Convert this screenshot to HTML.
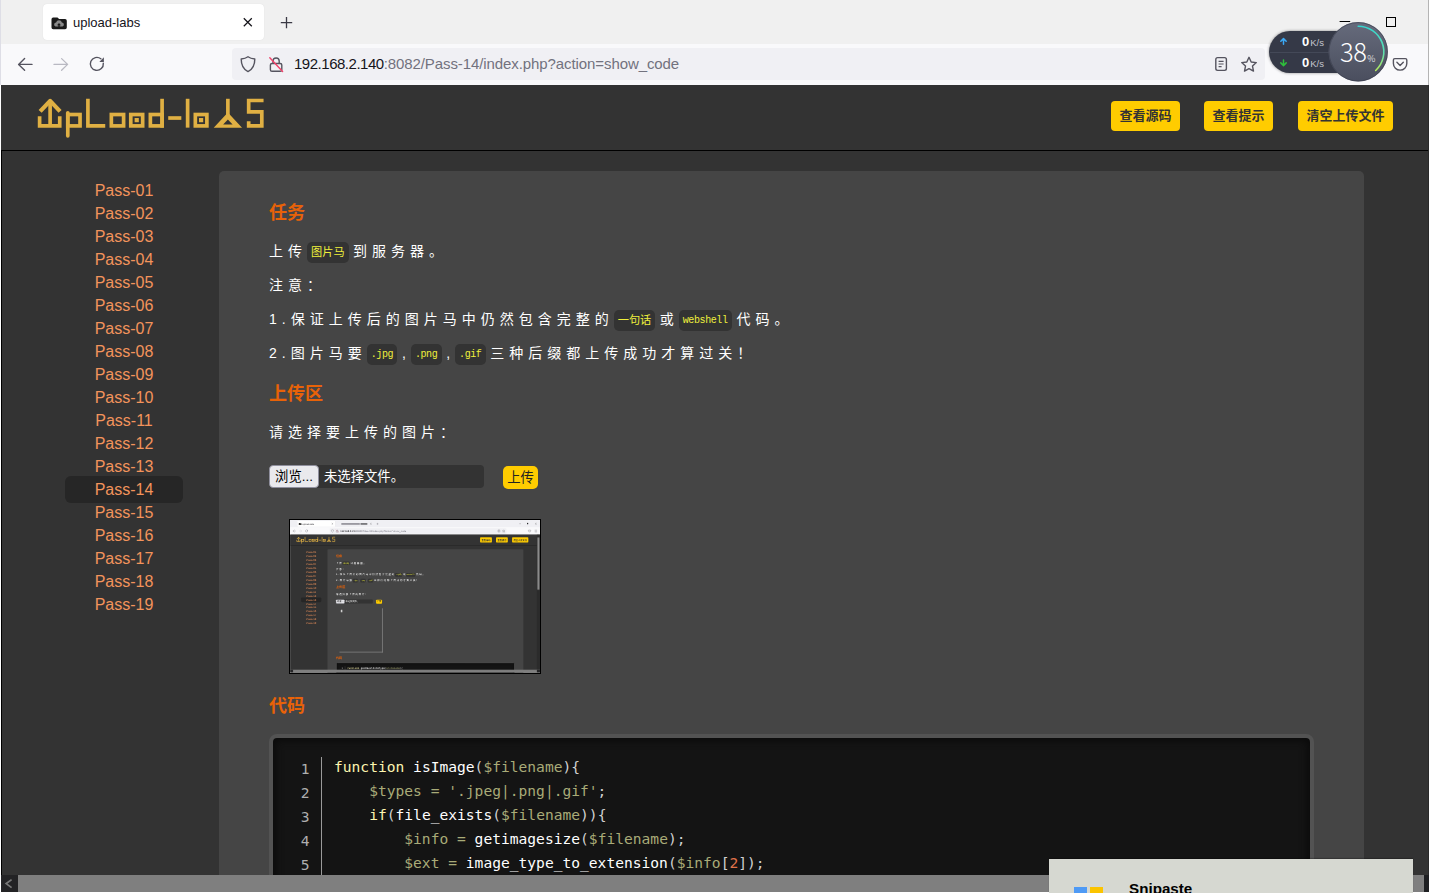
<!DOCTYPE html>
<html lang="zh-CN">
<head>
<meta charset="utf-8">
<title>upload-labs</title>
<style>
*{box-sizing:border-box;margin:0;padding:0}
html,body{width:1429px;height:893px;overflow:hidden;background:#fff}
body{position:relative;font-family:"Liberation Sans","Noto Sans CJK SC",sans-serif}
.abs{position:absolute}
/* ---------- browser chrome ---------- */
.tabbar{left:0;top:0;height:44px;background:#f0f0f0}
.navbar{left:0;top:44px;height:41px;background:#f9f9fb}
.tab{left:43px;top:4px;width:221px;height:36px;background:#fff;border-radius:4px;box-shadow:0 0 1px rgba(0,0,0,.12)}
.tabtitle{top:15px;font-size:13px;line-height:16px;color:#15141a;font-family:"Liberation Sans","Noto Sans CJK SC",sans-serif;white-space:nowrap}
.urlbar{left:232px;top:48px;height:32px;background:#f0f0f4;border-radius:4px}
.url{left:294px;top:55px;font-size:15px;line-height:18px;color:#15141a;white-space:nowrap;font-family:"Liberation Sans",sans-serif;letter-spacing:-.48px}
.url span{color:#72727e;letter-spacing:-.09px}
/* ---------- page ---------- */
.pg{left:1px;top:85px;height:807px;background:#333;overflow:hidden}
.head{left:0;top:0;width:100%;height:65px;background:#333}
.headline{left:0;top:65px;width:100%;height:1px;background:#000}
.hbtn{top:16px;height:30px;background:#fc0;border-radius:4px;color:#333;font-size:13px;font-weight:bold;line-height:30px;text-align:center;white-space:nowrap;font-family:"Liberation Sans","Noto Sans CJK SC",sans-serif}
.menu a{position:absolute;left:64px;width:118px;height:27px;line-height:28px;text-align:center;font-size:16px;color:#f3945c;text-decoration:none;border-radius:6px;font-family:"Liberation Sans",sans-serif}
.menu a.on{background:#262626}
.panel{left:218px;top:86px;width:1145px;height:800px;background:#454545;border-radius:5px}
h3{position:absolute;left:268px;margin-top:1px;font-size:18px;line-height:24px;color:#e86208;font-weight:bold;font-family:"Liberation Sans","Noto Sans CJK SC",sans-serif;white-space:nowrap}
.ln{position:absolute;left:268px;font-size:14px;line-height:24px;color:#fff;letter-spacing:5px;white-space:nowrap;font-family:"Liberation Sans","Noto Sans CJK SC",sans-serif}
.ln code{display:inline-block;position:relative;top:0;vertical-align:middle;height:21px;line-height:22.5px;padding:0 4px;margin:0 4.5px 0 0;background:#333;color:#f0f03c;border-radius:5px;font-size:11.2px;letter-spacing:0;font-family:"Liberation Mono","Noto Sans CJK SC",monospace}
.ln code.l{font-size:10px;letter-spacing:-.4px;padding-right:4.4px}
/* upload controls */
.file{left:268px;top:380px;width:215px;height:23px;background:#333;border-radius:4px}
.browse{left:268px;top:380px;width:50px;height:23px;background:#e9e9ed;border:1px solid #8f8f9d;border-radius:4px;font-size:13.33px;line-height:22px;text-align:center;color:#000;white-space:nowrap;font-family:"Liberation Sans","Noto Sans CJK SC",sans-serif}
.nofile{left:323px;top:380px;font-size:13.33px;line-height:24px;color:#fff;white-space:nowrap;font-family:"Liberation Sans","Noto Sans CJK SC",sans-serif}
.upbtn{left:502px;top:381px;width:35px;height:23px;background:#fc0;border-radius:5px;font-size:13.33px;line-height:24px;text-align:center;color:#222;white-space:nowrap;font-family:"Liberation Sans","Noto Sans CJK SC",sans-serif}
/* code block */
.codebox{left:268px;width:1045px;height:260px;background:#141414;border:4px solid #535353;border-radius:8px;box-shadow:inset 0 0 8px 2px #0a0a0a}
.gutter{left:320px;width:1px;height:140px;background:#9a9a9a}
.num{position:absolute;left:288.5px;margin-top:2px;width:20px;text-align:right;line-height:24px;color:#afafaf;font-family:"DejaVu Sans Mono","Liberation Mono",monospace;font-size:14.6px}
pre.cl{position:absolute;left:333px;font-family:"DejaVu Sans Mono","Liberation Mono",monospace;font-size:14.6px;line-height:24px;color:#d0d0d0;white-space:pre}
.k{color:#fdf6b0}.f{color:#fff}.v{color:#a9ab78}.n{color:#e0734a}
/* scrollbars */
.hsb{left:0;top:790px;height:17px;background:#7f7f7f}
.sbb{width:17px;height:17px;background:#232325}
/* snipaste */
#snip{left:1049px;top:859px;width:364px;height:34px;background:#d6d8d1;box-shadow:0 -1px 1px rgba(0,0,0,.22)}
#sniptxt{left:1129px;top:880px;font-size:15.2px;line-height:18px;font-weight:bold;color:#000;font-family:"Liberation Sans",sans-serif;white-space:nowrap}
/* thumbnail */
#thumb{left:288px;top:434px;width:252px;height:155px;background:#000;overflow:hidden}
#thumbclip{left:1px;top:1px;width:250px;height:153px;overflow:hidden;background:#333}
#thumbwin{will-change:transform;text-rendering:geometricPrecision}
#thumbclip{filter:blur(.7px)}
#thumbwin{left:0;top:0.1px;width:1461px;height:894px;transform:scale(.1711) rotate(.01deg);transform-origin:0 0;background:#fff}
.imgbox{left:288px;top:431px;width:254px;height:258px;border-right:4px solid #8a8a8a;border-bottom:4px solid #8a8a8a}
/* net widget */
.nw{font-size:9.5px;line-height:14px;color:#c3c6cf;white-space:nowrap;font-family:"Liberation Sans",sans-serif}
.nw b{font-size:13px;color:#fff;font-weight:bold;margin-right:1px}
#pct{font-size:25.5px;line-height:30px;color:#fff;white-space:nowrap;font-family:"Noto Sans CJK SC","Liberation Sans",sans-serif;letter-spacing:-.5px;font-weight:300}
#pct span{font-size:9px;letter-spacing:0;margin-left:1px}
</style>
</head>
<body>
<!-- browser chrome -->
<div class="abs tabbar" style="width:1429px;background:#f0f0f0"></div>
<div class="abs navbar" style="width:1429px"></div>
<div class="abs tab"></div>
<div class="abs tabtitle" style="left:73px">upload-labs</div>
<div class="abs urlbar" style="width:1033px"></div>
<div class="abs url">192.168.2.140<span>:8082/Pass-14/index.php?action=show_code</span></div>
<svg class="abs" style="left:0;top:0" width="1429" height="85" viewBox="0 0 1429 85" fill="none">
  <path d="M51.5 19.2 q0-1.700 1.700-1.700 h4.300 l1.600 1.600 h6 q1.700 0 1.700 1.700 v6.800 q0 1.700-1.700 1.700 h-11.900 q-1.700 0-1.700-1.700z" fill="#1b1b1b"/>
  <path d="M55.600 26.600 a2.100 2.100 0 0 1 .5-4.100 a3 3 0 0 1 5.800 0 a2.100 2.100 0 0 1 .5 4.100z" fill="#8a8a8a"/>
  <path d="M59 23 l2 2.200 h-1.300 v1.900 h-1.400 v-1.900 h-1.300z" fill="#1b1b1b"/>
  <path d="M243.800 18.300 l8 8 M251.800 18.300 l-8 8" stroke="#15141a" stroke-width="1.250"/>
  <path d="M280.8 22.600 h11.400 M286.5 16.900 v11.400" stroke="#3a3944" stroke-width="1.300"/>
  <path d="M32 64.400 h-13.400 M24.600 58.600 l-6 5.800 l6 5.800" stroke="#55545f" stroke-width="1.400" stroke-linecap="round" stroke-linejoin="round"/>
  <path d="M54 64.400 h13.400 M61.600 58.600 l6 5.800 l-6 5.800" stroke="#b9b9c2" stroke-width="1.300" stroke-linecap="round" stroke-linejoin="round"/>
  <path d="M103.300 63.200 a6.500 6.500 0 1 1 -2.400 -4.400" stroke="#55545f" stroke-width="1.400" stroke-linecap="round"/>
  <path d="M103.900 57.300 v4.600 h-4.600z" fill="#55545f"/>
  <path d="M248 56.800 c2.200 1.600 4.400 2 6.800 2.200 c0 6.200 -1.800 10.200 -6.800 12.600 c-5 -2.400 -6.800 -6.400 -6.800 -12.600 c2.400 -0.200 4.600 -0.600 6.800 -2.200z" stroke="#55545f" stroke-width="1.400" stroke-linejoin="round"/>
  <rect x="270.400" y="63.500" width="11.400" height="7.800" rx="1.600" stroke="#55545f" stroke-width="1.400"/>
  <path d="M273 63.300 v-2.200 a3.100 3.100 0 0 1 6.200 0 v2.200" stroke="#55545f" stroke-width="1.400"/>
  <path d="M269.800 57.800 l12.800 13.800" stroke="#f0426a" stroke-width="1.400" stroke-linecap="round"/>
  <g transform="translate(0 0)">
  <rect x="1215.800" y="57.600" width="10.600" height="12.800" rx="1.800" stroke="#55545f" stroke-width="1.400"/>
  <path d="M1218.600 61.400 h5 M1218.600 64 h5 M1218.600 66.600 h3" stroke="#55545f" stroke-width="1.200"/>
  <path d="M1249 57.300 l2.200 4.700 l5.100 .6 l-3.800 3.500 l1 5 l-4.500 -2.500 l-4.500 2.500 l1 -5 l-3.800 -3.500 l5.100 -.6z" stroke="#55545f" stroke-width="1.400" stroke-linejoin="round"/>
  <path d="M1394.800 58.600 h10.600 q1.400 0 1.400 1.400 v3.400 a6.700 6.700 0 0 1 -13.400 0 v-3.400 q0 -1.400 1.400 -1.400z" stroke="#55545f" stroke-width="1.400"/>
  <path d="M1396.900 62.300 l3.200 3.200 l3.200 -3.200" stroke="#55545f" stroke-width="1.400" stroke-linecap="round" stroke-linejoin="round"/>
  <path d="M1339.600 21.500 h10.600" stroke="#000" stroke-width="1"/>
  <rect x="1386.500" y="17.500" width="9" height="9" stroke="#000" stroke-width="1"/>
  </g>
</svg>
<!-- page -->
<div class="abs pg" style="width:1428px">
<div class="abs head"></div><div class="abs headline"></div>
<div class="abs" style="left:0;top:66px;width:1px;height:724px;background:#000"></div>
<div class="abs hbtn" style="left:1110px;width:69px">查看源码</div>
<div class="abs hbtn" style="left:1203px;width:69px">查看提示</div>
<div class="abs hbtn" style="left:1297px;width:95px">清空上传文件</div>
<svg class="abs" style="left:29px;top:5px" width="250" height="55" viewBox="0 0 1429 314" role="img" aria-label="UpLoad-labs">
    <title>UpLoad-labs</title>
    <g fill="none" stroke="#e0b043" stroke-width="21" stroke-linecap="butt" stroke-linejoin="miter">
      <polyline points="55,150 55,205 170,205 170,150"/>
      <line x1="115" y1="60" x2="115" y2="205"/>
      <polyline points="58,122 115,62 172,122" stroke-linejoin="round" stroke-width="24"/>
      <rect x="216" y="140" width="70" height="65"/>
      <line x1="216" y1="130" x2="216" y2="262" stroke-linecap="round"/>
      <polyline points="331,50 331,205 430,205"/>
      <rect x="465" y="140" width="70" height="65"/>
      <rect x="576" y="140" width="68" height="65"/>
      <rect x="688" y="140" width="67" height="65"/>
      <line x1="755" y1="50" x2="755" y2="215"/>
      <line x1="790" y1="160" x2="865" y2="160"/>
      <line x1="901" y1="50" x2="901" y2="215"/>
      <rect x="945" y="140" width="66" height="65"/>
      <line x1="1131" y1="50" x2="1131" y2="150"/>
      <polyline points="1250,178 1250,205 1325,205 1325,125 1250,125 1250,60 1335,60"/>
    </g>
    <g fill="#e0b043">
      <rect x="598" y="160" width="24" height="24"/>
      <rect x="966" y="160" width="24" height="24"/>
      <path d="M1131 128 L1212 215 L1050 215 Z M1131 168 L1104 197 L1158 197 Z" fill-rule="evenodd"/>
    </g>
  </svg>
<div class="menu">
  <a style="top:92px">Pass-01</a>
  <a style="top:115px">Pass-02</a>
  <a style="top:138px">Pass-03</a>
  <a style="top:161px">Pass-04</a>
  <a style="top:184px">Pass-05</a>
  <a style="top:207px">Pass-06</a>
  <a style="top:230px">Pass-07</a>
  <a style="top:253px">Pass-08</a>
  <a style="top:276px">Pass-09</a>
  <a style="top:299px">Pass-10</a>
  <a style="top:322px">Pass-11</a>
  <a style="top:345px">Pass-12</a>
  <a style="top:368px">Pass-13</a>
  <a class="on" style="top:391px">Pass-14</a>
  <a style="top:414px">Pass-15</a>
  <a style="top:437px">Pass-16</a>
  <a style="top:460px">Pass-17</a>
  <a style="top:483px">Pass-18</a>
  <a style="top:506px">Pass-19</a>
</div>
<div class="abs panel"></div>
<h3 style="top:115px">任务</h3>
<div class="ln" style="top:154px">上传<code>图片马</code>到服务器。</div>
<div class="ln" style="top:188px">注意：</div>
<div class="ln" style="top:222px">1.保证上传后的图片马中仍然包含完整的<code>一句话</code>或<code class="l">webshell</code>代码。</div>
<div class="ln" style="top:256px">2.图片马要<code class="l">.jpg</code>,<code class="l">.png</code>,<code class="l">.gif</code>三种后缀都上传成功才算过关！</div>
<h3 style="top:296px">上传区</h3>
<div class="ln" style="top:335px">请选择要上传的图片：</div>
<div class="abs file"></div><div class="abs browse">浏览...</div><div class="abs nofile">未选择文件。</div><div class="abs upbtn">上传</div>
<div id="thumb" class="abs"><div id="thumbclip" class="abs"><div id="thumbwin" class="abs">
<div class="abs tabbar" style="width:1461px;background:#f0f0f4"></div>
<div class="abs navbar" style="width:1461px"></div>
<div class="abs tab"></div>
<div class="abs tabtitle" style="left:73px">upload-labs</div>
<div class="abs" style="left:300px;top:19px;width:108px;height:8px;background:#55545f;opacity:.75"></div>
<div class="abs" style="left:412px;top:19px;width:40px;height:8px;background:#2a2a2e;opacity:.8"></div>
<div class="abs urlbar" style="width:1033px"></div>
<div class="abs url">192.168.2.140<span>:8082/Pass-13/index.php?action=show_code</span></div>
<svg class="abs" style="left:0;top:0" width="1461" height="85" viewBox="0 0 1461 85" fill="none">
  <path d="M51.5 19.2 q0-1.700 1.700-1.700 h4.300 l1.600 1.600 h6 q1.700 0 1.700 1.700 v6.800 q0 1.700-1.700 1.700 h-11.900 q-1.700 0-1.700-1.700z" fill="#1b1b1b"/>
  <path d="M55.600 26.600 a2.100 2.100 0 0 1 .5-4.100 a3 3 0 0 1 5.800 0 a2.100 2.100 0 0 1 .5 4.100z" fill="#8a8a8a"/>
  <path d="M59 23 l2 2.200 h-1.300 v1.900 h-1.400 v-1.900 h-1.300z" fill="#1b1b1b"/>
  <path d="M243.800 18.300 l8 8 M251.800 18.300 l-8 8" stroke="#15141a" stroke-width="1.250"/>
  <path d="M468.800 18.300 l8 8 M476.800 18.300 l-8 8" stroke="#15141a" stroke-width="1.250"/>
  <path d="M505.8 22.600 h11.400 M511.5 16.900 v11.400" stroke="#3a3944" stroke-width="1.300"/>
  <path d="M32 64.400 h-13.400 M24.600 58.600 l-6 5.800 l6 5.800" stroke="#55545f" stroke-width="1.400" stroke-linecap="round" stroke-linejoin="round"/>
  <path d="M54 64.400 h13.400 M61.600 58.600 l6 5.800 l-6 5.800" stroke="#b9b9c2" stroke-width="1.300" stroke-linecap="round" stroke-linejoin="round"/>
  <path d="M103.300 63.200 a6.500 6.500 0 1 1 -2.400 -4.400" stroke="#55545f" stroke-width="1.400" stroke-linecap="round"/>
  <path d="M103.900 57.300 v4.600 h-4.600z" fill="#55545f"/>
  <path d="M248 56.800 c2.200 1.600 4.400 2 6.800 2.200 c0 6.200 -1.800 10.200 -6.800 12.600 c-5 -2.400 -6.800 -6.400 -6.800 -12.600 c2.400 -0.200 4.600 -0.600 6.800 -2.200z" stroke="#55545f" stroke-width="1.400" stroke-linejoin="round"/>
  <rect x="270.400" y="63.500" width="11.400" height="7.800" rx="1.600" stroke="#55545f" stroke-width="1.400"/>
  <path d="M273 63.300 v-2.200 a3.100 3.100 0 0 1 6.200 0 v2.200" stroke="#55545f" stroke-width="1.400"/>
  <path d="M269.800 57.800 l12.800 13.800" stroke="#f0426a" stroke-width="1.400" stroke-linecap="round"/>
  <g transform="translate(0 0)">
  <rect x="1215.800" y="57.600" width="10.600" height="12.800" rx="1.800" stroke="#55545f" stroke-width="1.400"/>
  <path d="M1218.600 61.400 h5 M1218.600 64 h5 M1218.600 66.600 h3" stroke="#55545f" stroke-width="1.200"/>
  <path d="M1249 57.300 l2.200 4.700 l5.100 .6 l-3.800 3.500 l1 5 l-4.500 -2.500 l-4.500 2.500 l1 -5 l-3.800 -3.500 l5.100 -.6z" stroke="#55545f" stroke-width="1.400" stroke-linejoin="round"/>
  <path d="M1394.800 58.600 h10.600 q1.400 0 1.400 1.400 v3.400 a6.700 6.700 0 0 1 -13.400 0 v-3.400 q0 -1.400 1.400 -1.400z" stroke="#55545f" stroke-width="1.400"/>
  <path d="M1396.900 62.300 l3.200 3.200 l3.200 -3.200" stroke="#55545f" stroke-width="1.400" stroke-linecap="round" stroke-linejoin="round"/>
  <path d="M1339.600 21.500 h10.600" stroke="#000" stroke-width="1"/>
  <rect x="1386.500" y="17.500" width="9" height="9" stroke="#000" stroke-width="1"/>
  </g>
  <path d="M1432 17 l10 10 M1442 17 l-10 10" stroke="#000" stroke-width="1"/>
  <path d="M1430 59 h14 M1430 64.500 h14 M1430 70 h14" stroke="#55545f" stroke-width="1.400"/>
</svg>
<div class="abs pg" style="width:1460px">
<div class="abs head"></div><div class="abs headline"></div>
<div class="abs" style="left:0;top:66px;width:1px;height:724px;background:#000"></div>
<div class="abs hbtn" style="left:1110px;width:69px">查看源码</div>
<div class="abs hbtn" style="left:1203px;width:69px">查看提示</div>
<div class="abs hbtn" style="left:1297px;width:95px">清空上传文件</div>
<svg class="abs" style="left:29px;top:5px" width="250" height="55" viewBox="0 0 1429 314" role="img" aria-label="UpLoad-labs">
    <title>UpLoad-labs</title>
    <g fill="none" stroke="#e0b043" stroke-width="21" stroke-linecap="butt" stroke-linejoin="miter">
      <polyline points="55,150 55,205 170,205 170,150"/>
      <line x1="115" y1="60" x2="115" y2="205"/>
      <polyline points="58,122 115,62 172,122" stroke-linejoin="round" stroke-width="24"/>
      <rect x="216" y="140" width="70" height="65"/>
      <line x1="216" y1="130" x2="216" y2="262" stroke-linecap="round"/>
      <polyline points="331,50 331,205 430,205"/>
      <rect x="465" y="140" width="70" height="65"/>
      <rect x="576" y="140" width="68" height="65"/>
      <rect x="688" y="140" width="67" height="65"/>
      <line x1="755" y1="50" x2="755" y2="215"/>
      <line x1="790" y1="160" x2="865" y2="160"/>
      <line x1="901" y1="50" x2="901" y2="215"/>
      <rect x="945" y="140" width="66" height="65"/>
      <line x1="1131" y1="50" x2="1131" y2="150"/>
      <polyline points="1250,178 1250,205 1325,205 1325,125 1250,125 1250,60 1335,60"/>
    </g>
    <g fill="#e0b043">
      <rect x="598" y="160" width="24" height="24"/>
      <rect x="966" y="160" width="24" height="24"/>
      <path d="M1131 128 L1212 215 L1050 215 Z M1131 168 L1104 197 L1158 197 Z" fill-rule="evenodd"/>
    </g>
  </svg>
<div class="menu">
  <a style="top:92px">Pass-01</a>
  <a style="top:115px">Pass-02</a>
  <a style="top:138px">Pass-03</a>
  <a style="top:161px">Pass-04</a>
  <a style="top:184px">Pass-05</a>
  <a style="top:207px">Pass-06</a>
  <a style="top:230px">Pass-07</a>
  <a style="top:253px">Pass-08</a>
  <a style="top:276px">Pass-09</a>
  <a style="top:299px">Pass-10</a>
  <a style="top:322px">Pass-11</a>
  <a style="top:345px">Pass-12</a>
  <a class="on" style="top:368px">Pass-13</a>
  <a style="top:391px">Pass-14</a>
  <a style="top:414px">Pass-15</a>
  <a style="top:437px">Pass-16</a>
  <a style="top:460px">Pass-17</a>
  <a style="top:483px">Pass-18</a>
  <a style="top:506px">Pass-19</a>
</div>
<div class="abs panel"></div>
<h3 style="top:115px">任务</h3>
<div class="ln" style="top:154px">上传<code>图片马</code>到服务器。</div>
<div class="ln" style="top:188px">注意：</div>
<div class="ln" style="top:222px">1.保证上传后的图片马中仍然包含完整的<code>一句话</code>或<code class="l">webshell</code>代码。</div>
<div class="ln" style="top:256px">2.图片马要<code class="l">.jpg</code>,<code class="l">.png</code>,<code class="l">.gif</code>三种后缀都上传成功才算过关！</div>
<h3 style="top:296px">上传区</h3>
<div class="ln" style="top:335px">请选择要上传的图片：</div>
<div class="abs file"></div><div class="abs browse">浏览...</div><div class="abs nofile">未选择文件。</div><div class="abs upbtn">上传</div>
<div class="abs imgbox"></div>
<div class="abs" style="left:296px;top:440px;width:9px;height:14px;background:#cfcfcf;border-radius:1px"></div>
<h3 style="top:706px">代码</h3>
<div class="abs codebox" style="top:747px"></div>
<div class="abs gutter" style="top:770px;height:60px"></div>
<div class="num" style="top:768px">1</div>
<pre class="cl" style="top:768px"><span class="k">function</span> <span class="f">getReailFileType</span>(<span class="v">$filename</span>){</pre>
<div class="abs" style="left:1442px;top:0;width:18px;height:790px;background:#2b2b2b"></div>
<div class="abs" style="left:1445px;top:17px;width:12px;height:305px;background:#8a8a8a"></div>
<div class="abs hsb" style="width:1460px"></div>
<div class="abs sbb" style="left:0;top:790px"></div>
<div class="abs sbb" style="left:1442px;top:790px;width:18px"></div>
</div>
</div></div></div>
<h3 style="top:608px">代码</h3>
<div class="abs codebox" style="top:649px"></div>
<div class="abs gutter" style="top:672px;height:140px"></div>
<div class="num" style="top:670px">1</div>
<pre class="cl" style="top:670px"><span class="k">function</span> <span class="f">isImage</span>(<span class="v">$filename</span>){</pre>
<div class="num" style="top:694px">2</div>
<pre class="cl" style="top:694px">    <span class="v">$types = '.jpeg|.png|.gif'</span>;</pre>
<div class="num" style="top:718px">3</div>
<pre class="cl" style="top:718px">    <span class="k">if</span>(<span class="f">file_exists</span>(<span class="v">$filename</span>)){</pre>
<div class="num" style="top:742px">4</div>
<pre class="cl" style="top:742px">        <span class="v">$info =</span> <span class="f">getimagesize</span>(<span class="v">$filename</span>);</pre>
<div class="num" style="top:766px">5</div>
<pre class="cl" style="top:766px">        <span class="v">$ext =</span> <span class="f">image_type_to_extension</span>(<span class="v">$info</span>[<span class="n">2</span>]);</pre>
<div class="abs" style="left:1427px;top:0;width:1px;height:790px;background:#2a2a2a"></div>
<div class="abs hsb" style="width:1428px"></div>
<div class="abs sbb" style="left:0;top:790px"></div>
<div class="abs sbb" style="left:1423px;top:790px;width:5px;background:#1e1f22"></div>
<svg class="abs" style="left:0;top:790px" width="17" height="17" viewBox="0 0 17 17"><path d="M10.600 4.600 L5.200 8.600 L10.600 12.600" fill="none" stroke="#777" stroke-width="1.800"/></svg>
</div>
<div class="abs" style="left:1428px;top:0;width:1px;height:85px;background:#b4b4b4"></div>
<div class="abs" style="left:0;top:0;width:1px;height:85px;background:#dedee6"></div>
<!-- network monitor widget -->
<div class="abs" style="left:1269px;top:31px;width:110px;height:42px;border-radius:21px;background:#353947;box-shadow:0 0 3px rgba(0,0,0,.45)"></div>
<div class="abs" style="left:1270px;top:51.5px;width:70px;height:1px;background:#444958"></div>
<div class="abs nw" style="left:1302px;top:35px"><b>0</b>K/s</div>
<div class="abs nw" style="left:1302px;top:56px"><b>0</b>K/s</div>
<svg class="abs" style="left:1269px;top:20px" width="130" height="64" viewBox="1269 20 130 64" fill="none">
  <defs>
    <linearGradient id="cg" x1="0" y1="0" x2="0" y2="1"><stop offset="0" stop-color="#666b7c"/><stop offset="1" stop-color="#4a4e5e"/></linearGradient>
    <linearGradient id="ag" x1="0" y1="0" x2="0" y2="1"><stop offset="0" stop-color="#35d6cf"/><stop offset=".6" stop-color="#5ee0b0"/><stop offset="1" stop-color="#b5ec5a"/></linearGradient>
  </defs>
  <circle cx="1358.200" cy="51.800" r="29.700" fill="url(#cg)"/>
  <circle cx="1358.200" cy="51.800" r="29.200" stroke="#3a3e4c" stroke-width="1" opacity=".6"/>
  <path d="M1358.200 26.200 A25.600 25.600 0 0 1 1375.700 70.500" stroke="url(#ag)" stroke-width="1.600" stroke-linecap="round"/>
  <path d="M1283.500 44.200 v-5.400 M1280.800 41.300 l2.700 -2.700 l2.700 2.700" stroke="#3ba9f5" stroke-width="1.500" stroke-linecap="round" stroke-linejoin="round"/>
  <path d="M1283.500 60 v5.400 M1280.800 62.900 l2.700 2.700 l2.700 -2.700" stroke="#2fbf3b" stroke-width="1.500" stroke-linecap="round" stroke-linejoin="round"/>
</svg>
<div class="abs" id="pct" style="left:1340px;top:36px">38<span>%</span></div>
<!-- notification -->
<div id="snip" class="abs"></div>
<div class="abs" style="left:1074px;top:887px;width:13px;height:6px;background:#4e9af5"></div>
<div class="abs" style="left:1090px;top:887px;width:13px;height:6px;background:#fbc400"></div>
<div id="sniptxt" class="abs">Snipaste</div>
</body>
</html>
